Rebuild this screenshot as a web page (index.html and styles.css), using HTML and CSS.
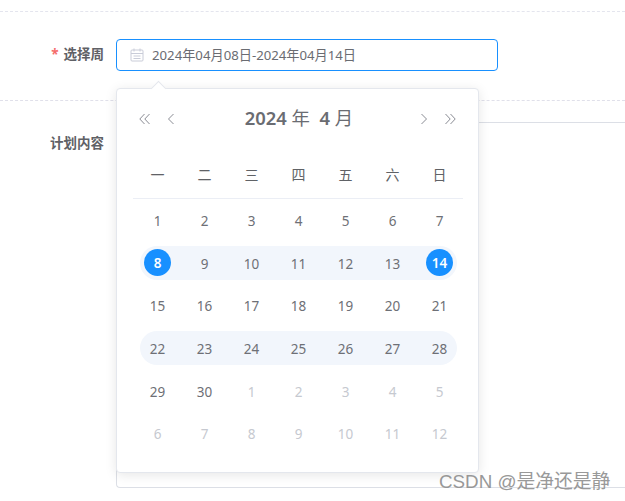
FILE: index.html
```html
<!DOCTYPE html>
<html lang="zh">
<head>
<meta charset="utf-8">
<title>选择周</title>
<link rel="stylesheet" href="styles.css">
</head>
<body>
<main class="form">
  <div class="row-week">
    <label class="label"><span class="req">*</span>选择周</label>
    <div class="input">
      <svg class="cal" width="14" height="14" viewBox="0 0 14 14" fill="none" stroke="#c9ccd8" stroke-width="1"><rect x="1" y="2" width="12" height="11" rx="1"/><path d="M1 5.5h12M4 .5v3M10 .5v3M3.5 8h7M3.5 10.5h7"/></svg>
      <span>2024年04月08日-2024年04月14日</span>
    </div>
  </div>
  <div class="row-plan">
    <label class="label">计划内容</label>
    <div class="textarea"></div>
  </div>
</main>

<section class="popup">
  <span class="arrow"></span>
  <header class="head">
    <div class="nav">
      <svg width="12" height="12" viewBox="0 0 12 12" fill="none" stroke="#8a8c94"><path d="M5.5 1 .8 6l4.7 5M10.5 1 5.8 6l4.7 5"/></svg>
      <svg width="8" height="12" viewBox="0 0 8 12" fill="none" stroke="#8a8c94"><path d="M6.5 1 1.5 6l5 5"/></svg>
    </div>
    <div class="title"><b>2024</b> 年&nbsp; <b>4</b> 月</div>
    <div class="nav">
      <svg width="8" height="12" viewBox="0 0 8 12" fill="none" stroke="#8a8c94"><path d="M1.5 1l5 5-5 5"/></svg>
      <svg width="12" height="12" viewBox="0 0 12 12" fill="none" stroke="#8a8c94"><path d="M1.5 1l4.7 5-4.7 5M6.5 1l4.7 5-4.7 5"/></svg>
    </div>
  </header>
  <div class="weekdays"><span>一</span><span>二</span><span>三</span><span>四</span><span>五</span><span>六</span><span>日</span></div>
  <div class="weeks">
    <div class="week"><span>1</span><span>2</span><span>3</span><span>4</span><span>5</span><span>6</span><span>7</span></div>
    <div class="week band"><span class="sel">8</span><span>9</span><span>10</span><span>11</span><span>12</span><span>13</span><span class="sel">14</span></div>
    <div class="week"><span>15</span><span>16</span><span>17</span><span>18</span><span>19</span><span>20</span><span>21</span></div>
    <div class="week band"><span>22</span><span>23</span><span>24</span><span>25</span><span>26</span><span>27</span><span>28</span></div>
    <div class="week"><span>29</span><span>30</span><span class="off">1</span><span class="off">2</span><span class="off">3</span><span class="off">4</span><span class="off">5</span></div>
    <div class="week"><span class="off">6</span><span class="off">7</span><span class="off">8</span><span class="off">9</span><span class="off">10</span><span class="off">11</span><span class="off">12</span></div>
  </div>
</section>

<div class="mark">CSDN @是净还是静</div>
</body>
</html>
```
FILE: styles.css
```css
* { box-sizing: border-box; }
html, body { margin: 0; height: 501px; overflow: hidden; background: #fff; }
body {
  position: relative;
  font-family: "Noto Sans", "Noto Sans CJK SC", sans-serif;
  color: #606266;
}
.form { padding-top: 11px; }
.row-week {
  height: 90px;
  display: flex;
  padding-top: 27px;
  border-top: 1px dashed #e4e5ee;
  border-bottom: 1px dashed #e0e0ea;
}
.label {
  width: 104px;
  margin-right: 12px;
  text-align: right;
  font-size: 13.5px;
  font-weight: 700;
  line-height: 31px;
  color: #5f6166;
}
.req { color: #f56c6c; margin-right: 5px; }
.input {
  width: 382px;
  height: 32px;
  display: flex;
  align-items: center;
  gap: 8px;
  padding-left: 13px;
  border: 1px solid #1890ff;
  border-radius: 4px;
  font-size: 13.2px;
  color: #6a6c72;
  white-space: nowrap;
}
.input span { position: relative; top: -1px; }
.row-plan { display: flex; padding-top: 21px; }
.row-plan .label { line-height: 42px; }
.textarea {
  flex: 1;
  height: 366px;
  border: 1px solid #dcdfe6;
  border-right: 0;
  border-radius: 4px 0 0 4px;
}
.popup {
  position: absolute;
  left: 116px;
  top: 88px;
  width: 363px;
  height: 385px;
  padding: 0 16px 0 17px;
  background: #fff;
  border: 1px solid #e4e7ed;
  border-radius: 4px;
  box-shadow: 0 2px 12px rgba(0, 0, 0, .1);
}
.arrow {
  position: absolute;
  left: 36px;
  top: -6px;
  width: 11px;
  height: 11px;
  background: #fff;
  border: 1px solid #e4e7ed;
  border-right: 0;
  border-bottom: 0;
  transform: rotate(45deg);
}
.head {
  height: 59px;
  padding: 0 6px 0 5px;
  display: flex;
  align-items: center;
  justify-content: space-between;
}
.nav { display: flex; align-items: center; gap: 16px; }
.title { font-size: 18.4px; line-height: 24px; padding-bottom: 1px; font-weight: 400; color: #6a6c72; white-space: pre; margin-left: 3px; }
.title b { font-weight: 600; }
.weekdays, .week { display: grid; grid-template-columns: repeat(7, 47px); justify-items: center; align-items: center; }
.weekdays {
  height: 51px;
  margin: 0 -1px;
  padding: 2px 0 0 1px;
  font-size: 14px;
  border-bottom: 1px solid #ebeef5;
}
.weeks { display: grid; grid-auto-rows: 42.6px; }
.week { font-size: 13.5px; color: #6e7076; position: relative; }
.week span { position: relative; top: 1px; }
.week .sel { top: 0; }
.band::before {
  content: "";
  position: absolute;
  left: 6px;
  right: 6px;
  top: 4px;
  height: 34px;
  border-radius: 17px;
  background: #f2f6fc;
}
.sel {
  width: 27px;
  height: 27px;
  border-radius: 50%;
  background: #1890ff;
  color: #fff;
  font-weight: 600;
  display: flex;
  align-items: center;
  justify-content: center;
}
.off { color: #c0c4cc; }
.week .off { color: #c6c9d0; }
.mark {
  position: absolute;
  left: 439px;
  top: 470px;
  font-family: "Liberation Sans", "Noto Sans CJK SC", sans-serif;
  font-size: 18.8px;
  line-height: 24px;
  color: #8e8e8e;
  opacity: .9;
  white-space: nowrap;
}
```
